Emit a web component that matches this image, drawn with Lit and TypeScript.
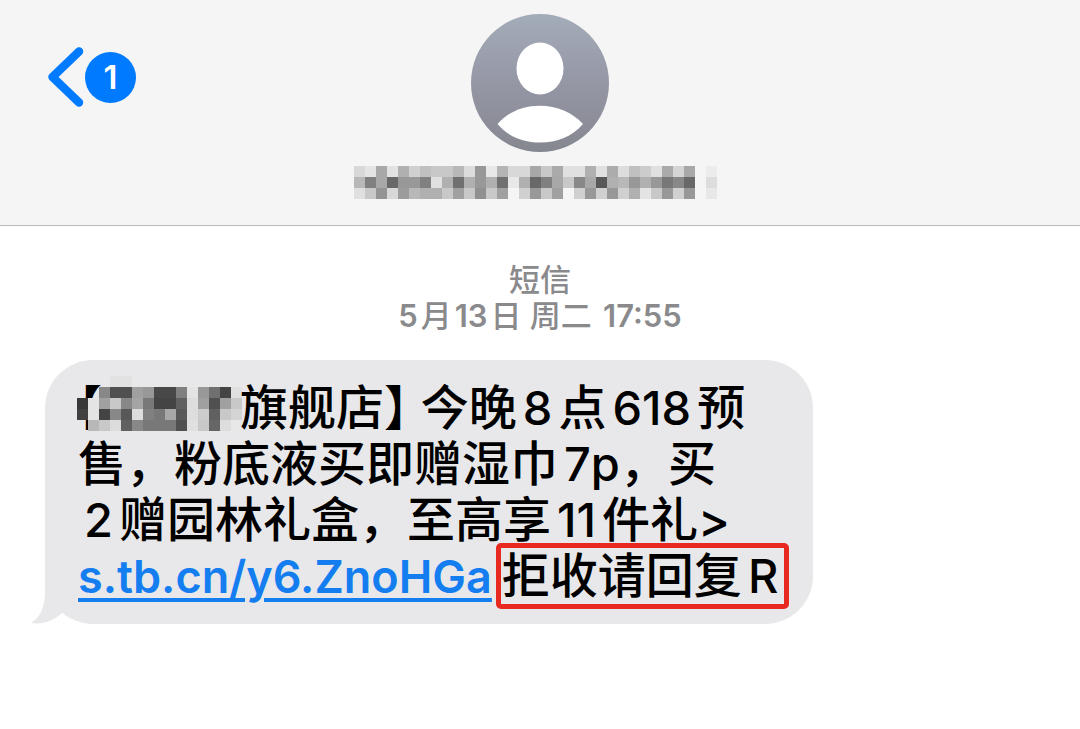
import { LitElement, html, css, svg } from "lit";
import { customElement } from "lit/decorators.js";

const CELL = 11;

// Grey levels of the blurred-out areas, one hex pair per cell; ".." leaves the cell clear.
const SENDER = [
  "d8 e4 a8 e2 b0 d0 c0 c8 c8 b8 dc 98 e8 b4 d8 d8 a8 c8 aa e0 e0 b0 e0 ac dd c0 cc e0 aa d4 a8 .. ec",
  "b8 80 a8 68 98 98 80 e0 b0 70 b0 98 b0 70 e8 b0 68 80 a8 c8 88 a8 58 b0 b8 98 b0 98 78 88 68 .. dd",
  "e0 c8 94 d8 9c b8 b0 b0 c8 a0 c8 90 c8 a0 .. d0 98 c8 a0 .. d0 98 d0 98 d0 b0 e4 c8 98 d0 98 .. e8",
];

const SHOP = [
  ".. .. .. e2 e2 .. .. .. .. .. .. .. .. .. ..",
  ".. .. 88 50 50 a0 98 48 48 80 e4 98 70 44 e0",
  "38 e4 a0 c8 88 a4 78 44 44 60 dd a0 50 a0 c8",
  "40 e4 44 88 58 dd 80 78 a8 58 dd cc 60 c8 d4",
  ".. b8 c8 dc 60 88 78 78 78 50 e0 c8 66 dd e8",
];

const cells = (rows: string[]) =>
  rows.flatMap((row, y) =>
    row.split(" ").map((level, x) =>
      level === ".."
        ? null
        : svg`<rect x=${x * CELL} y=${y * CELL} width=${CELL} height=${CELL} fill=${"#" + level.repeat(3)}></rect>`
    )
  );

@customElement("app-root")
export class AppRoot extends LitElement {
  static styles = css`
    :host {
      display: block;
      min-height: 100vh;
      background: #fff;
      color: #000;
      font-family: Inter, "Noto Sans CJK SC", sans-serif;
    }
    .bar {
      display: grid;
      grid-template-columns: 1fr auto 1fr;
      align-items: start;
      padding: 14px 48px 26px;
      background: #f5f5f5;
      border-bottom: 1px solid #b9b9b9;
    }
    .back {
      display: flex;
      align-items: center;
      justify-self: start;
      gap: 1px;
      margin-top: 33px;
      padding: 0;
      border: 0;
      background: none;
      font: inherit;
      cursor: pointer;
    }
    .count {
      width: 51px;
      line-height: 51px;
      border-radius: 50%;
      background: #007aff;
      color: #fff;
      font-size: 33px;
      font-weight: 600;
      text-align: center;
    }
    .contact {
      display: flex;
      flex-direction: column;
      align-items: center;
      gap: 14px;
    }
    .contact svg,
    .back svg {
      display: block;
    }
    .stamp {
      margin: 0;
      padding: 36px 0 26px;
      text-align: center;
      color: #8a8a8d;
      font-size: 31px;
      line-height: 36px;
      font-weight: 500;
    }
    .stamp .row {
      display: block;
    }
    .stamp .num {
      margin: 0 3px;
      font-weight: 600;
    }
    .bubble {
      position: relative;
      width: fit-content;
      box-sizing: border-box;
      margin: 0 45px;
      padding: 20px 24px 20px 33px;
      border-radius: 48px;
      background: #e8e8ea;
      font-size: 48px;
      line-height: 56px;
      font-weight: 500;
    }
    .tail {
      position: absolute;
      left: -15px;
      bottom: 0;
    }
    .line {
      display: block;
      height: 56px;
      white-space: nowrap;
    }
    .num {
      margin: 0 6px;
    }
    .bubble .num {
      font-size: 47px;
      font-weight: 550;
    }
    .num.tight {
      margin-right: 0;
    }
    .half {
      font-feature-settings: "halt";
    }
    .shop {
      vertical-align: top;
      margin: -4px -2px 0 -25px;
    }
    .link {
      color: #147ef0;
      font-size: 45px;
      font-weight: 600;
      text-decoration-thickness: 4px;
      text-underline-offset: 5px;
    }
    .box {
      display: inline-block;
      vertical-align: top;
      margin: -5px 0 -5px 4px;
      padding-left: 1px;
      border: 5px solid #e8291f;
      border-radius: 5px;
    }
  `;

  render() {
    return html`
      <header class="bar">
        <button class="back" aria-label="返回">
          <svg width="36" height="60" viewBox="0 0 36 60" fill="none" stroke="#007aff" stroke-width="8.5" stroke-linecap="round" stroke-linejoin="round">
            <path d="M31 4.5 4.5 30 31 55.5"></path>
          </svg>
          <span class="count">1</span>
        </button>
        <div class="contact">
          <svg width="138" height="138" viewBox="0 0 138 138">
            <defs>
              <linearGradient id="tone" x1="0" y1="0" x2="0" y2="1">
                <stop offset="0" stop-color="#a3acb9"></stop>
                <stop offset="0.55" stop-color="#9495a3"></stop>
                <stop offset="1" stop-color="#858790"></stop>
              </linearGradient>
            </defs>
            <circle cx="69" cy="69" r="69" fill="url(#tone)"></circle>
            <ellipse cx="69" cy="54.5" rx="23.5" ry="26" fill="#fff"></ellipse>
            <path d="M26.5 110C37 98 52 91.700 69 91.700S101 98 112 110C101 122.500 86 128.600 69 128.600S37 122.500 26.500 110Z" fill="#fff"></path>
          </svg>
          <svg width="372" height="33" shape-rendering="crispEdges">${cells(SENDER)}</svg>
        </div>
      </header>
      <main>
        <p class="stamp">
          <span class="row">短信</span>
          <span class="row"><span class="num">5</span>月<span class="num">13</span>日 周二 <span class="num">17:55</span></span>
        </p>
        <div class="bubble">
          <svg class="tail" width="42" height="60" viewBox="0 0 42 60" fill="#e8e8ea">
            <path d="M15 0V28C15 43 10 54 1 59C14 61 24 56 32 49L42 30Z"></path>
          </svg>
          <span class="line"><span class="half">【</span><svg class="shop" width="165" height="55" shape-rendering="crispEdges">${cells(SHOP)}</svg>旗舰店<span class="half">】</span> 今晚<span class="num">8</span>点<span class="num">618</span>预</span>
          <span class="line">售，粉底液买即赠湿巾<span class="num tight">7p</span>，买</span>
          <span class="line"><span class="num">2</span>赠园林礼盒，至高享<span class="num">11</span>件礼&gt;</span>
          <span class="line"><a class="link" href="#">s.tb.cn/y6.ZnoHGa</a><span class="box">拒收请回复<span class="num">R</span></span></span>
        </div>
      </main>
    `;
  }
}
